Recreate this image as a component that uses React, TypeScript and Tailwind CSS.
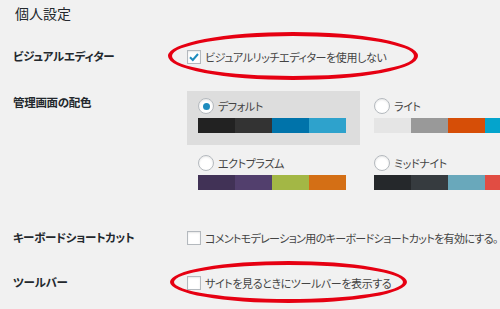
import React from "react";

const schemes = [
  { name: "デフォルト", colors: ["#222222", "#333333", "#0073aa", "#2ea2cc"], checked: true },
  { name: "ライト", colors: ["#e5e5e5", "#999999", "#d64e07", "#04a4cc"], checked: false },
  { name: "エクトプラズム", colors: ["#413256", "#523f6d", "#a3b745", "#d46f15"], checked: false },
  { name: "ミッドナイト", colors: ["#25282b", "#363b3f", "#69a8bb", "#e14d43"], checked: false },
];

function Checkbox({ checked }: { checked?: boolean }) {
  return (
    <span className="w-[14px] h-[14px] shrink-0 bg-white border border-[#b4b9be] shadow-[inset_0_1px_2px_rgba(0,0,0,0.1)] flex items-center justify-center">
      {checked && (
        <svg width="12" height="12" viewBox="0 0 12 12">
          <path d="M2 6.2 L4.8 9 L10 3" fill="none" stroke="#1e8cbe" strokeWidth="2" />
        </svg>
      )}
    </span>
  );
}

function Radio({ checked }: { checked?: boolean }) {
  return (
    <span className="w-[16px] h-[16px] shrink-0 rounded-full bg-white border border-[#b4b9be] shadow-[inset_0_1px_2px_rgba(0,0,0,0.1)] flex items-center justify-center">
      {checked && <span className="w-[7px] h-[7px] rounded-full bg-[#1e8cbe]" />}
    </span>
  );
}

export default function App() {
  return (
    <div className="relative w-[500px] h-[309px] overflow-hidden bg-[#f1f1f1] text-[#444] font-['Noto_Sans_CJK_JP',sans-serif] [font-feature-settings:'palt']">
      <h2 className="pl-[15px] text-[14px] leading-[26px] text-[#23282d] font-normal">個人設定</h2>

      <div className="pl-[13px]">
        <div className="mt-[18px] h-[26px] flex items-center">
          <div className="w-[174px] shrink-0 text-[11.5px] tracking-[-0.3px] font-bold text-[#23282d]">ビジュアルエディター</div>
          <label className="flex items-center gap-[4px] text-[11px] tracking-[-0.4px] whitespace-nowrap">
            <Checkbox checked />
            ビジュアルリッチエディターを使用しない
          </label>
        </div>

        <div className="mt-[21px] flex">
          <div className="w-[174px] shrink-0 text-[11.5px] tracking-[-0.3px] leading-[22px] font-bold text-[#23282d]">管理画面の配色</div>
          <div className="grid grid-cols-[173px_173px] gap-[3px] shrink-0">
            {schemes.map((s) => (
              <div key={s.name} className={`pt-[7px] px-[11px] pb-[12px] ${s.checked ? "bg-[#dddddd]" : ""}`}>
                <div className="flex items-center gap-[4px] h-[16px] text-[11px] tracking-[-0.4px]">
                  <Radio checked={s.checked} />
                  {s.name}
                </div>
                <div className="mt-[4px] flex h-[15px] w-[148px]">
                  {s.colors.map((c) => (
                    <span key={c} className="flex-1" style={{ backgroundColor: c }} />
                  ))}
                </div>
              </div>
            ))}
          </div>
        </div>

        <div className="mt-[23px] h-[26px] flex items-center">
          <div className="w-[174px] shrink-0 text-[11.5px] tracking-[-0.3px] font-bold text-[#23282d]">キーボードショートカット</div>
          <label className="flex items-center gap-[4px] text-[11px] tracking-[-0.65px] whitespace-nowrap">
            <Checkbox />
            コメントモデレーション用のキーボードショートカットを有効にする。
          </label>
        </div>

        <div className="mt-[19px] h-[26px] flex items-center">
          <div className="w-[174px] shrink-0 text-[11.5px] tracking-[-0.3px] font-bold text-[#23282d]">ツールバー</div>
          <label className="flex items-center gap-[4px] text-[11px] tracking-[-0.4px] whitespace-nowrap">
            <Checkbox />
            サイトを見るときにツールバーを表示する
          </label>
        </div>
      </div>

      <div className="absolute left-[168px] top-[32px] w-[250px] h-[48px] rounded-[50%] border-[4px] border-[#e60012]" />
      <div className="absolute left-[170px] top-[261px] w-[237px] h-[42px] rounded-[50%] border-[4px] border-[#e60012]" />
    </div>
  );
}
